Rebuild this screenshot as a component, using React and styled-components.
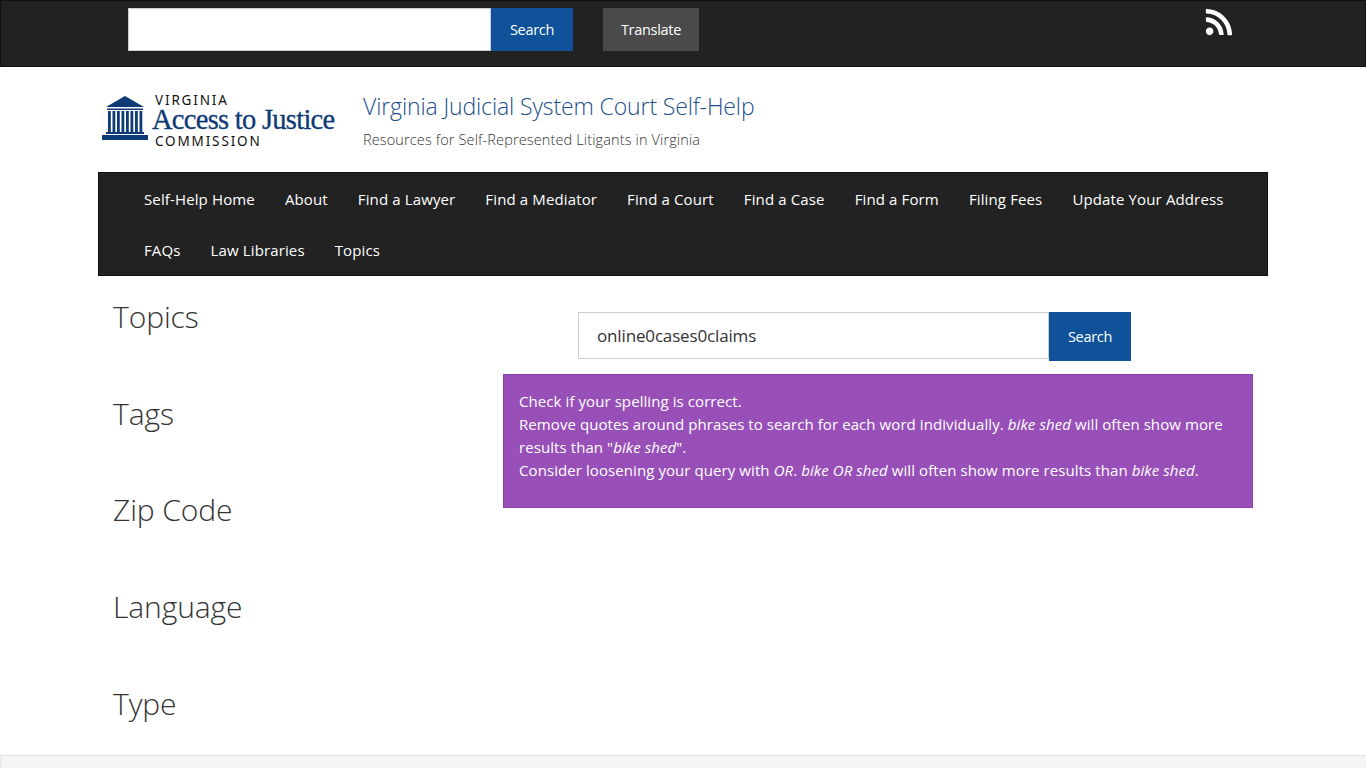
import styled, { createGlobalStyle } from 'styled-components';
import { FaRss } from 'react-icons/fa';

const GlobalStyle = createGlobalStyle`
    html, body {
        margin: 0;
        padding: 0;
        background: #fff;
        font-family: "Open Sans", "Noto Sans", sans-serif;
        color: #333;
    }
    * {
        box-sizing: border-box;
    }
`;

const TopBar = styled.div`
    height: 67px;
    background: #222;
    border: 1px solid #111;
    display: flex;
    align-items: flex-start;
    padding: 7px 0 0 127px;
`;

const TopSearch = styled.div`
    display: flex;
    height: 43px;
`;

const TopInput = styled.div`
    width: 363px;
    background: #fff;
    border: 1px solid #ccc;
`;

const Button = styled.button`
    width: ${props => props.width}px;
    height: ${props => props.height}px;
    background: ${props => props.bg || '#0f5299'};
    color: #fff;
    border: 0;
    padding: 0 0 1px;
    font-family: inherit;
    font-size: 14.5px;
    letter-spacing: -0.3px;
`;

const TranslateButton = styled(Button)`
    margin-left: 30px;
`;

const RssLink = styled.a`
    margin-left: auto;
    margin-right: 131px;
    margin-top: -1px;
    color: #fff;
    font-size: 30px;
    line-height: 0;
`;

const Container = styled.div`
    width: 1170px;
    margin: 0 auto;
`;

const Header = styled.header`
    height: 105px;
    display: flex;
`;

const Logo = styled.div`
    width: 265px;
    padding: 26px 0 0 4px;
    display: flex;
    gap: 4px;
`;

const LogoText = styled.div`
    display: flex;
    flex-direction: column;
    color: #111;
`;

const LogoSmall = styled.span`
    font-size: 13.5px;
    font-weight: 400;
    letter-spacing: 1.85px;
    line-height: 15px;
    margin-left: 3px;
    font-family: "Noto Sans", sans-serif;
`;

const LogoBig = styled.span`
    font-family: "Liberation Serif", serif;
    font-size: 28.5px;
    letter-spacing: -0.72px;
    line-height: 25px;
    margin: -1px 0 2px;
    color: #0e3a75;
    -webkit-text-stroke: 0.3px #0e3a75;
    white-space: nowrap;
`;

const SiteTitle = styled.div`
    padding-top: 24px;
`;

const SiteName = styled.a`
    display: block;
    font-size: 23px;
    font-weight: 300;
    line-height: 30px;
    letter-spacing: -0.12px;
    color: #1d4f8c;
`;

const SiteSub = styled.div`
    margin-top: 9px;
    font-size: 14.5px;
    font-weight: 300;
    line-height: 20px;
    letter-spacing: 0.13px;
    color: #333;
`;

const Nav = styled.nav`
    height: 104px;
    background: #222;
    border: 1px solid #111;
    padding: 0 0 0 30px;
    display: flex;
    flex-wrap: wrap;
    align-content: flex-start;
`;

const NavItem = styled.a`
    height: 51px;
    padding: 0 15px;
    display: flex;
    align-items: center;
    color: #fff;
    font-size: 15px;
    letter-spacing: 0.13px;
    white-space: nowrap;
`;

const NavBreak = styled.div`
    flex-basis: 100%;
    height: 0;
`;

const Columns = styled.div`
    display: grid;
    grid-template-columns: 390px 780px;
    height: 479px;
`;

const Sidebar = styled.aside`
    padding: 20px 15px 0;
`;

const FacetTitle = styled.h3`
    margin: 0 0 51.7px;
    height: 45px;
    font-size: 30px;
    font-weight: 300;
    line-height: 41px;
    letter-spacing: -0.1px;
    color: #333;
`;

const Main = styled.main`
    padding: 36px 15px 0;
`;

const SearchForm = styled.form`
    display: flex;
    width: 553px;
    height: 49px;
    margin-left: 75px;
`;

const SearchInput = styled.input`
    width: 471px;
    height: 47px;
    border: 1px solid #ccc;
    padding: 0 18px;
    font-family: inherit;
    font-size: 17px;
    letter-spacing: -0.15px;
    color: #333;
    outline: none;
`;

const Alert = styled.div`
    margin-top: 13px;
    padding: 15px;
    height: 134px;
    background: #9850b8;
    border: 1px solid #8a44a8;
    color: #fff;
    font-size: 15px;
    line-height: 23px;
    letter-spacing: 0.08px;
`;

const Footer = styled.footer`
    height: 13px;
    background: #f5f5f5;
    border-top: 1px solid #e0e0e0;
    border-left: 1px solid #e8e8e8;
`;

const columnXs = [6, 10.5, 15, 19.5, 24, 28.5, 33, 37.5];

const Temple = () => (
    <svg width="46" height="48" viewBox="0 0 46 48" fill="#0e3a75">
        <path d="M23 3 L42 14 L4 14 Z" />
        <rect x="5" y="15.5" width="36" height="1.5" />
        {columnXs.map(x => (
            <rect key={x} x={x} y="18" width="2.8" height="21" />
        ))}
        <rect x="4" y="39" width="38" height="2" />
        <rect x="0" y="42" width="46" height="5" />
    </svg>
);

const topics = ['Topics', 'Tags', 'Zip Code', 'Language', 'Type'];
const firstRow = ['Self-Help Home', 'About', 'Find a Lawyer', 'Find a Mediator', 'Find a Court', 'Find a Case', 'Find a Form', 'Filing Fees', 'Update Your Address'];
const secondRow = ['FAQs', 'Law Libraries', 'Topics'];

const App = () => (
    <>
        <GlobalStyle />
        <TopBar>
            <TopSearch>
                <TopInput />
                <Button width={82} height={43}>Search</Button>
            </TopSearch>
            <TranslateButton width={96} height={43} bg="#4a4a4a">Translate</TranslateButton>
            <RssLink><FaRss /></RssLink>
        </TopBar>
        <Container>
            <Header>
                <Logo>
                    <Temple />
                    <LogoText>
                        <LogoSmall>VIRGINIA</LogoSmall>
                        <LogoBig>Access to Justice</LogoBig>
                        <LogoSmall>COMMISSION</LogoSmall>
                    </LogoText>
                </Logo>
                <SiteTitle>
                    <SiteName>Virginia Judicial System Court Self-Help</SiteName>
                    <SiteSub>Resources for Self-Represented Litigants in Virginia</SiteSub>
                </SiteTitle>
            </Header>
            <Nav>
                {firstRow.map(label => <NavItem key={label}>{label}</NavItem>)}
                <NavBreak />
                {secondRow.map(label => <NavItem key={label}>{label}</NavItem>)}
            </Nav>
            <Columns>
                <Sidebar>
                    {topics.map(label => <FacetTitle key={label}>{label}</FacetTitle>)}
                </Sidebar>
                <Main>
                    <SearchForm>
                        <SearchInput defaultValue="online0cases0claims" />
                        <Button type="button" width={82} height={49}>Search</Button>
                    </SearchForm>
                    <Alert>
                        Check if your spelling is correct.<br />
                        Remove quotes around phrases to search for each word individually. <em>bike shed</em> will often show more results than "<em>bike shed</em>".<br />
                        Consider loosening your query with <em>OR</em>. <em>bike OR shed</em> will often show more results than <em>bike shed</em>.
                    </Alert>
                </Main>
            </Columns>
        </Container>
        <Footer />
    </>
);

export default App;
